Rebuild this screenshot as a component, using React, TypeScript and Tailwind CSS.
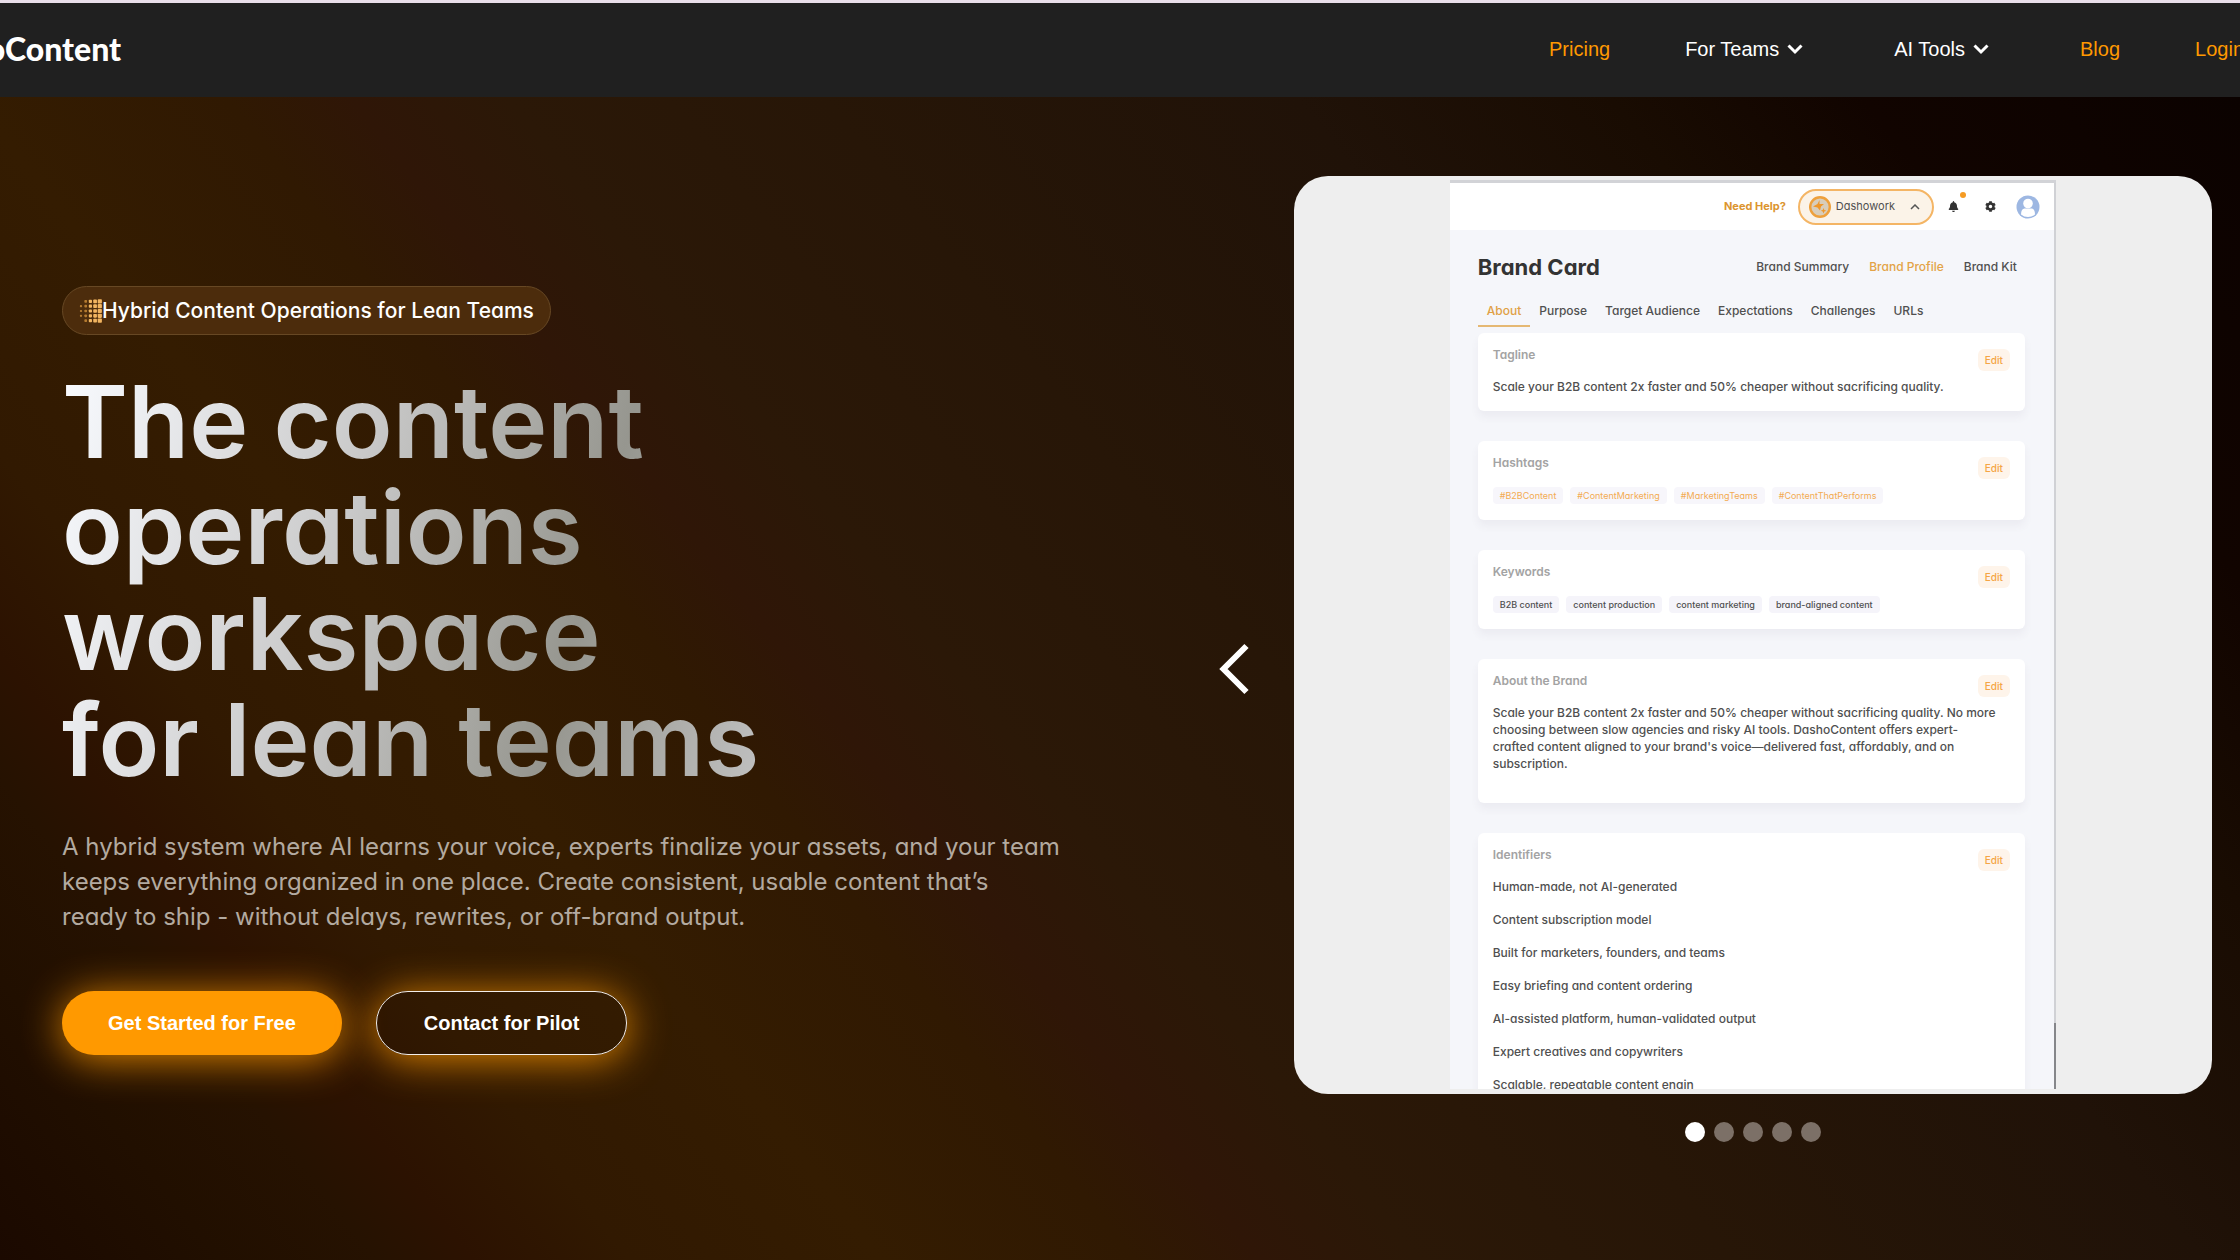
import React, { useState } from 'react';
import { FaBell, FaCog } from 'react-icons/fa';

const hashtags = ['#B2BContent', '#ContentMarketing', '#MarketingTeams', '#ContentThatPerforms'];
const keywords = ['B2B content', 'content production', 'content marketing', 'brand-aligned content'];
const identifiers = [
  'Human-made, not AI-generated',
  'Content subscription model',
  'Built for marketers, founders, and teams',
  'Easy briefing and content ordering',
  'AI-assisted platform, human-validated output',
  'Expert creatives and copywriters',
  'Scalable, repeatable content engin',
];
const tabs = ['About', 'Purpose', 'Target Audience', 'Expectations', 'Challenges', 'URLs'];
const views = ['Brand Summary', 'Brand Profile', 'Brand Kit'];

function Chevron() {
  return (
    <svg viewBox="0 0 16 12" className="h-3 w-4" fill="none" stroke="currentColor" strokeWidth="3">
      <path d="M1.500 2.500 8 9l6.500-6.500" />
    </svg>
  );
}

function Header() {
  return (
    <header className="overflow-hidden border-t-3 border-[#e9dfea] bg-[#202020]">
      <div className="-mr-1 -ml-[86px] flex h-[94px] items-center justify-between pb-[2px] whitespace-nowrap">
        <a href="#home" className="font-['Lato'] text-[32px] leading-8 font-black text-white">
          DashoContent
        </a>
        <nav className="flex items-center gap-[75px] font-['Liberation_Sans'] text-xl text-[#ff9900]">
          <a href="#pricing">Pricing</a>
          <button type="button" className="mr-4 flex items-center gap-2 text-white">
            For Teams <Chevron />
          </button>
          <button type="button" className="mr-4 flex items-center gap-2 text-white">
            AI Tools <Chevron />
          </button>
          <a href="#blog">Blog</a>
          <a href="#login">Login</a>
        </nav>
      </div>
    </header>
  );
}

// halftone half-circle, the dots grow towards the right
function DotsIcon() {
  const rows = [
    [1, 2, 3, 4],
    [0, 1, 2, 3, 4],
    [0, 1, 2, 3, 4],
    [0, 1, 2, 3, 4],
    [1, 2, 3, 4],
  ];
  return (
    <svg viewBox="0 0 23 24" className="h-6 w-[23px] shrink-0">
      {rows.map((cols, y) =>
        cols.map((x) => {
          const size = 2.2 + x * 0.5;
          return (
            <rect
              key={`${x}-${y}`}
              x={x * 4.7 + 2 - size / 2}
              y={y * 4.8 + 2.4 - size / 2}
              width={size}
              height={size}
              rx="0.8"
              fill={x > 1 ? '#f2b560' : '#b57b30'}
            />
          );
        })
      )}
    </svg>
  );
}

function EditButton() {
  return (
    <button type="button" className="h-[22px] w-8 rounded-md bg-[#fef4ea] text-[10px] text-[#f5a544]">
      Edit
    </button>
  );
}

function Panel({ title, children }: { title: string; children: React.ReactNode }) {
  return (
    <section className="rounded-md bg-white px-[15px] pb-4 shadow-[0_6px_8px_rgba(90,70,110,0.06)]">
      <div className="flex items-start justify-between">
        <h3 className="pt-3 text-xs leading-5 font-semibold text-[#a3a3a3]">{title}</h3>
        <div className="pt-4">
          <EditButton />
        </div>
      </div>
      {children}
    </section>
  );
}

function BrandWindow() {
  return (
    <div className="flex h-full w-[66%] overflow-hidden border-t-3 border-[#d2d3d7] bg-[#f5f6fa] text-[#505050]">
      <div className="min-w-0 flex-1">
        <div className="flex h-[47px] items-center justify-end bg-white pr-[14px]">
          <a href="#help" className="mr-3 text-[11px] font-bold text-[#dc952f]">
            Need Help?
          </a>
          <button
            type="button"
            className="flex h-9 w-[136px] items-center rounded-full border-2 border-[#f4b565] bg-[#fbf3e8] pr-3 pl-2 text-[11px]"
          >
            <svg viewBox="0 0 24 24" className="mr-1 size-6 shrink-0">
              <circle cx="12" cy="12" r="9.800" fill="#d8cdbb" stroke="#eea03c" strokeWidth="2.400" />
              <path d="M11.500 5v4h4.500l-3 2.500-1 4-2.500-3-4.500-1 4.500-2.500z" fill="#ef972a" />
              <path d="m15.500 13 .8 2 2 .8-2 .8-.8 2-.8-2-2-.8 2-.8z" fill="#ef972a" />
            </svg>
            Dashowork
            <svg viewBox="0 0 10 6" className="ml-auto h-[6px] w-[10px]" fill="none" stroke="#555" strokeWidth="1.500">
              <path d="M1 5l4-4 4 4" />
            </svg>
          </button>
          <button type="button" aria-label="Notifications" className="relative ml-[14px]">
            <FaBell className="size-[11px] text-[#333]" />
            <span className="absolute -top-[9px] -right-[7px] size-[6px] rounded-full bg-[#f59b23]" />
          </button>
          <button type="button" aria-label="Settings" className="ml-[26px]">
            <FaCog className="size-[11px] text-[#333]" />
          </button>
          <button type="button" aria-label="Account" className="ml-[20px]">
            <svg viewBox="0 0 24 24" className="size-6">
              <circle cx="12" cy="12" r="11.500" fill="#9db7e2" />
              <circle cx="12" cy="8.500" r="4.800" fill="#fff" />
              <path d="M5 19.500c0-4 1.500-6 3.500-6h7c2 0 3.500 2 3.500 6a11 11 0 0 1-14 0z" fill="#fff" />
            </svg>
          </button>
        </div>

        <div className="pr-[29px] pl-7">
          <div className="flex items-center justify-between pt-6 pr-2">
            <h2 className="text-[22px] leading-[26px] font-bold text-[#333]">Brand Card</h2>
            <div className="flex gap-5 text-xs font-medium">
              {views.map((view) => (
                <a key={view} href="#brand" className={view === 'Brand Profile' ? 'text-[#e3a347]' : ''}>
                  {view}
                </a>
              ))}
            </div>
          </div>

          <div className="mt-4 flex text-xs font-medium">
            {tabs.map((tab) => (
              <button
                key={tab}
                type="button"
                className={
                  tab === 'About'
                    ? 'h-[31px] border-b-2 border-[#e5b873] px-[9px] text-[#e0a045]'
                    : 'h-[31px] border-b-2 border-transparent px-[9px]'
                }
              >
                {tab}
              </button>
            ))}
          </div>

          <div className="mt-[6px] space-y-[30px] text-xs leading-[17px] font-medium">
            <Panel title="Tagline">
              <p className="pt-[7px]">Scale your B2B content 2x faster and 50% cheaper without sacrificing quality.</p>
            </Panel>
            <Panel title="Hashtags">
              <div className="flex gap-[7px] pt-2">
                {hashtags.map((tag) => (
                  <span key={tag} className="rounded bg-[#f7f6fb] px-[7px] text-[9px] font-normal text-[#f3ab52]">
                    {tag}
                  </span>
                ))}
              </div>
            </Panel>
            <Panel title="Keywords">
              <div className="flex gap-[7px] pt-2">
                {keywords.map((word) => (
                  <span key={word} className="rounded bg-[#f5f4fa] px-[7px] text-[9px]">
                    {word}
                  </span>
                ))}
              </div>
            </Panel>
            <Panel title="About the Brand">
              <p className="pt-[7px] pb-[15px]">
                Scale your B2B content 2x faster and 50% cheaper without sacrificing quality. No more
                <br />
                choosing between slow agencies and risky AI tools. DashoContent offers expert-
                <br />
                crafted content aligned to your brand&apos;s voice—delivered fast, affordably, and on
                <br />
                subscription.
              </p>
            </Panel>
            <Panel title="Identifiers">
              <ul className="space-y-4 pt-[7px]">
                {identifiers.map((item) => (
                  <li key={item}>{item}</li>
                ))}
              </ul>
            </Panel>
          </div>
        </div>
      </div>
      <div className="flex w-[2px] flex-col justify-end bg-[#d0d1d5]">
        <div className="h-[66px] bg-[#85868a]" />
      </div>
    </div>
  );
}

function Carousel() {
  const [active, setActive] = useState(0);
  return (
    <div className="w-[41vw] shrink-0">
      <div className="flex aspect-square justify-center overflow-hidden rounded-[34px] bg-[#eeeeee] pt-1 pb-[5px]">
        <BrandWindow />
      </div>
      <div className="mt-7 flex justify-center gap-[9px]">
        {[0, 1, 2, 3, 4].map((i) => (
          <button
            key={i}
            type="button"
            aria-label={`Slide ${i + 1}`}
            onClick={() => setActive(i)}
            className={i === active ? 'size-5 rounded-full bg-white' : 'size-5 rounded-full bg-[#7c7067]'}
          />
        ))}
      </div>
    </div>
  );
}

export default function App() {
  return (
    <div className="flex min-h-screen flex-col overflow-hidden font-['Inter',sans-serif] [font-feature-settings:'cv11']">
      <Header />
      <main className="flex flex-1 items-start bg-[linear-gradient(52deg,#1b0900_0%,#210f00_7%,#261201_12%,#2c1201_15%,#311901_20%,#341c01_28%,#301902_36%,#2f1607_40%,#2b1807_45%,#271607_55%,#201208_70%,#190c02_80%,#110400_88%,#0b0200_100%)] pt-[79px] pr-7 pb-20 pl-[62px]">
        <div className="flex-1 pt-[110px]">
          <p className="flex h-[49px] w-fit items-center rounded-full border border-[#674824] bg-[#4c2c0c] px-4 text-[21px] font-medium text-white">
            <DotsIcon />
            Hybrid Content Operations for Lean Teams
          </p>
          <h1 className="mt-[34px] w-fit bg-[linear-gradient(105deg,#f9fbff_0%,#c9c9c9_40%,#96968f_72%,#c0c0c0_100%)] bg-clip-text text-[100px] leading-[106px] font-semibold text-transparent">
            The content
            <br />
            operations
            <br />
            workspace
            <br />
            for lean teams
          </h1>
          <p className="mt-9 text-2xl leading-[35px] text-[#b3aaa0]">
            A hybrid system where AI learns your voice, experts finalize your assets, and your team
            <br />
            keeps everything organized in one place. Create consistent, usable content that’s
            <br />
            ready to ship - without delays, rewrites, or off-brand output.
          </p>
          <div className="mt-[57px] flex gap-[34px] font-['Liberation_Sans'] text-xl font-bold text-white">
            <button
              type="button"
              className="h-16 rounded-full bg-[#ff9900] px-[46px] shadow-[0_4px_40px_rgba(255,153,0,0.85)]"
            >
              Get Started for Free
            </button>
            <button
              type="button"
              className="h-16 rounded-full border border-[#f3eeea] px-[47px] shadow-[0_4px_40px_rgba(255,153,0,0.85)]"
            >
              Contact for Pilot
            </button>
          </div>
        </div>
        <button type="button" aria-label="Previous slide" className="mr-[45px] self-center pb-[18px] text-white">
          <svg viewBox="0 0 30 52" className="h-[52px] w-[30px]" fill="none" stroke="currentColor" strokeWidth="6">
            <path d="M27.500 3 4.500 26l23 23" />
          </svg>
        </button>
        <Carousel />
      </main>
    </div>
  );
}
